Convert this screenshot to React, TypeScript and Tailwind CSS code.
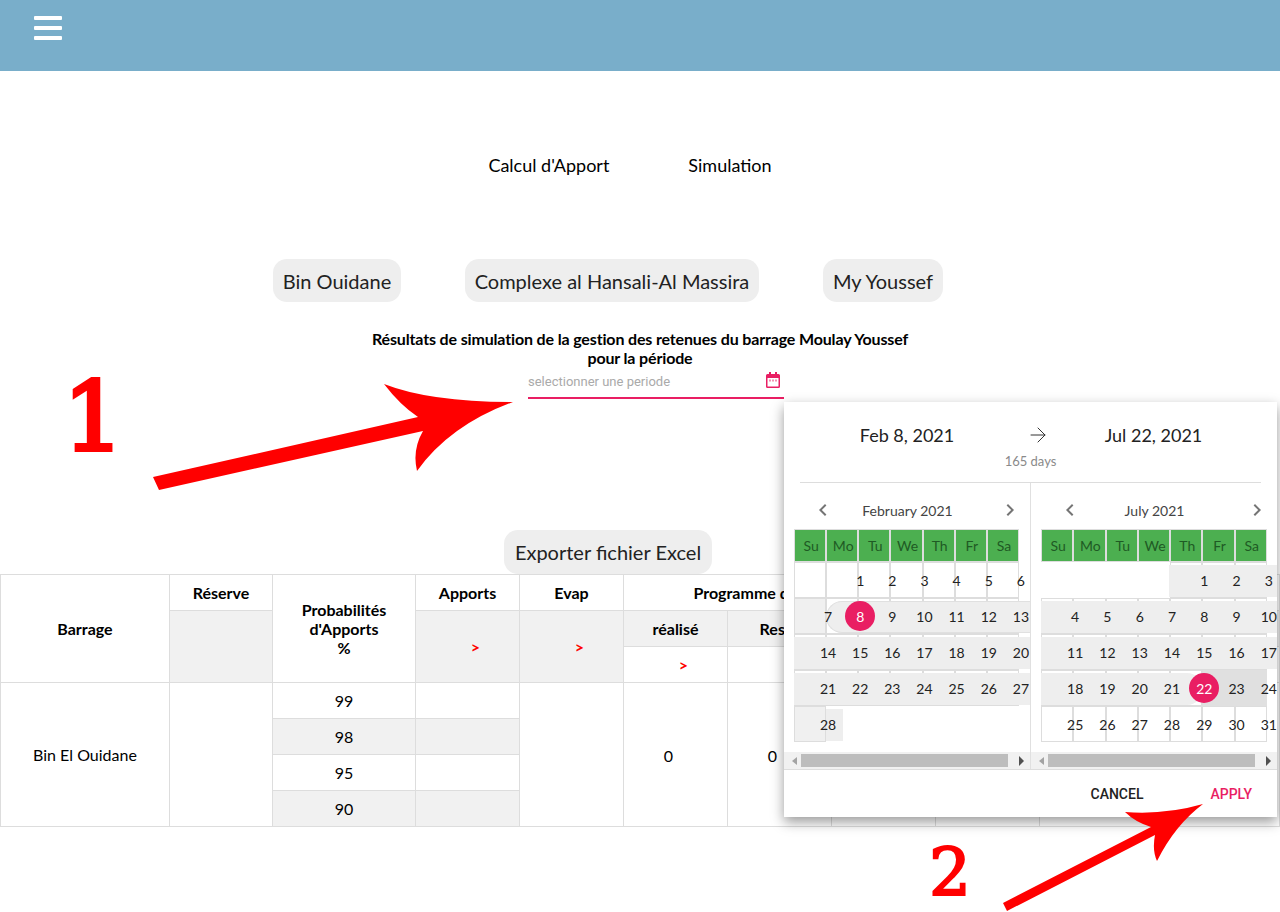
import { ArrowRight } from 'lucide-react'

type CalRow = {
    days: (number | null)[]
    bands?: string[]
    graySu?: boolean
    plain?: number
    selected?: number
}

const februaryRows: CalRow[] = [
    { days: [null, 1, 2, 3, 4, 5, 6] },
    { days: [7, 8, 9, 10, 11, 12, 13], graySu: true, selected: 8, bands: ['left-8 right-0 rounded-l-[18px] border-l border-y border-[#e0e0e0] bg-[#eeeeee]'] },
    { days: [14, 15, 16, 17, 18, 19, 20], bands: ['left-0 right-0 bg-[#eeeeee]'] },
    { days: [21, 22, 23, 24, 25, 26, 27], bands: ['left-0 right-0 bg-[#eeeeee]'] },
    { days: [28, null, null, null, null, null, null], graySu: true, plain: 1, bands: ['left-8 w-[17px] bg-[#eeeeee]'] },
]

const julyRows: CalRow[] = [
    { days: [null, null, null, null, 1, 2, 3], plain: 4, bands: ['left-[128px] right-0 bg-[#eeeeee]'] },
    { days: [4, 5, 6, 7, 8, 9, 10], bands: ['left-0 right-0 bg-[#eeeeee]'] },
    { days: [11, 12, 13, 14, 15, 16, 17], bands: ['left-0 right-0 bg-[#eeeeee]'] },
    { days: [18, 19, 20, 21, 22, 23, 24], selected: 22, bands: ['left-0 w-[162px] rounded-r-[18px] bg-[#eeeeee]', 'left-[162px] w-[64px] !top-0 !bottom-0 bg-[#e0e0e0]'] },
    { days: [25, 26, 27, 28, 29, 30, 31] },
]

const weekDays = ['Su', 'Mo', 'Tu', 'We', 'Th', 'Fr', 'Sa']

function Chevron({ right }: { right?: boolean }) {
    return (
        <svg width="24" height="24" viewBox="0 0 24 24" className="shrink-0 fill-[#757575]">
            <path d={right ? 'M10 6L8.59 7.41 13.17 12l-4.58 4.59L10 18l6-6z' : 'M15.41 7.41L14 6l-6 6 6 6 1.41-1.41L10.83 12z'} />
        </svg>
    )
}

function ScrollBar() {
    return (
        <div className="flex h-[17px] items-center bg-[#f1f1f1]">
            <div className="ml-2 h-0 w-0 border-y-[4px] border-r-[5px] border-y-transparent border-r-[#a3a3a3]" />
            <div className="ml-[4px] h-[13px] w-[207px] bg-[#bdbdbd]" />
            <div className="ml-[11px] h-0 w-0 border-y-[5px] border-l-[5px] border-y-transparent border-l-[#505050]" />
        </div>
    )
}

function CalendarPane({ title, rows, tableWidth, last }: { title: string; rows: CalRow[]; tableWidth: string; last?: boolean }) {
    return (
        <div className={`flex flex-col overflow-hidden ${last ? 'w-[246px]' : 'w-[247px] border-r border-[#e0e0e0]'}`}>
            <div className="flex h-[46px] items-center pt-[8px] pr-[8px] pl-[27px]">
                <Chevron />
                <div className="flex-1 pr-[18px] text-center text-[14px] text-[#444]">{title}</div>
                <Chevron right />
            </div>
            <div className="h-[223px] pl-[10px]">
                <div className={`grid grid-cols-7 ${tableWidth}`}>
                    {weekDays.map((d) => (
                        <div key={d} className="flex h-[33px] items-center justify-center border border-[#dddddd] bg-[#4caf50] pl-[2px] text-[14px] text-[#1f5a24]">
                            {d}
                        </div>
                    ))}
                </div>
                {rows.map((row, i) => (
                    <div key={i} className="relative h-9">
                        <div className={`grid h-9 grid-cols-7 ${tableWidth}`}>
                            {row.days.map((_, j) => (
                                <div
                                    key={j}
                                    className={`${row.plain !== undefined && j >= (row.plain === 4 ? 0 : 1) && (row.plain === 4 ? j < 4 : true) ? '' : 'border border-[#dddddd]'} ${row.graySu && j === 0 ? 'bg-[#f0f0f0]' : ''}`}
                                />
                            ))}
                        </div>
                        {row.bands?.map((b) => (
                            <div key={b} className={`absolute top-[3px] bottom-[1px] ${b}`} />
                        ))}
                        <div className={`absolute top-0 left-0 grid h-9 grid-cols-7 ${tableWidth}`}>
                            {row.days.map((d, j) => (
                                <div key={j} className="flex translate-x-[18px] items-center justify-center text-[14px] text-[#222]">
                                    {d === row.selected && d !== null ? (
                                        <span className="flex h-[30px] w-[30px] items-center justify-center rounded-full bg-[#e91e63] text-white">{d}</span>
                                    ) : (
                                        d
                                    )}
                                </div>
                            ))}
                        </div>
                    </div>
                ))}
            </div>
            <ScrollBar />
        </div>
    )
}

function DatePopup() {
    return (
        <div className="absolute top-[402px] left-[784px] z-10 w-[493px] bg-white font-['Lato',sans-serif] shadow-[0_5px_12px_rgba(0,0,0,0.4)]">
            <div className="relative h-[80px] pt-[21px]">
                <div className="flex">
                    <div className="w-[246px] text-center text-[18px] leading-[24px] text-[#222]">Feb 8, 2021</div>
                    <div className="w-[247px] text-center text-[18px] leading-[24px] text-[#222]">Jul 22, 2021</div>
                </div>
                <ArrowRight size={24} strokeWidth={1} className="absolute top-[21px] left-[242px] text-[#333]" />
                <div className="mt-[6px] text-center text-[13px] leading-[16px] text-[#8a8a8a]">165 days</div>
            </div>
            <div className="mx-4 border-t border-[#dddddd]" />
            <div className="flex border-b border-[#dddddd]">
                <CalendarPane title="February 2021" rows={februaryRows} tableWidth="w-[225px]" />
                <CalendarPane title="July 2021" rows={julyRows} tableWidth="w-[226px]" last />
            </div>
            <div className="flex h-[47px] items-center justify-end gap-[67px] pt-[2px] pr-[25px] font-['Roboto',sans-serif] text-[14px] font-medium">
                <span className="text-[#222]">CANCEL</span>
                <span className="text-[#e91e63]">APPLY</span>
            </div>
        </div>
    )
}

function Annotations() {
    return (
        <>
            <svg width="1280" height="912" viewBox="0 0 1280 912" className="pointer-events-none absolute top-0 left-0 z-20">
                <path fill="#ff0000" d="M153 477 L418 417 Q400 405 384 384 Q430 402 513 402 Q450 425 417 471 Q412 450 423 431 L159 490 Z" />
                <path fill="#ff0000" d="M1003 903 L1151 827 Q1135 822 1125 812 Q1165 815 1203 804 Q1175 825 1157 861 Q1152 850 1155 835 L1007 911 Z" />
            </svg>
            <div className="absolute top-[352px] left-[63px] z-20 font-['DejaVu_Serif',serif] text-[96px] leading-[130px] text-[#ff0000] [-webkit-text-stroke:4px_#ff0000]">1</div>
            <div className="absolute top-[832px] left-[929px] z-20 font-['DejaVu_Serif',serif] text-[66px] leading-[82px] text-[#ff0000] [-webkit-text-stroke:2px_#ff0000]">2</div>
        </>
    )
}

function ResultsTable() {
    const th = 'border border-[#dddddd] text-[16px] leading-[19px] font-bold text-black'
    const td = 'border border-[#dddddd] text-center text-[16px] font-normal text-black'
    const gray = 'bg-[#f1f1f1]'
    const mark = <span className="pl-[16px] text-[16px] font-bold text-[#ff0000]">&gt;</span>
    return (
        <table className="w-[1280px] table-fixed border-collapse text-center">
            <colgroup>
                <col className="w-[169px]" />
                <col className="w-[103px]" />
                <col className="w-[143px]" />
                <col className="w-[104px]" />
                <col className="w-[104px]" />
                <col className="w-[104px]" />
                <col className="w-[104px]" />
                <col className="w-[104px]" />
                <col className="w-[104px]" />
                <col />
            </colgroup>
            <thead>
                <tr className="h-9">
                    <th rowSpan={3} className={th}>Barrage</th>
                    <th className={th}>Réserve</th>
                    <th rowSpan={3} className={th}>Probabilités<br />d'Apports<br />%</th>
                    <th className={th}>Apports</th>
                    <th className={th}>Evap</th>
                    <th colSpan={3} className={`${th} pr-[14px]`}>Programme de lâchers</th>
                    <th className={th} />
                    <th className={th} />
                </tr>
                <tr className="h-9">
                    <th rowSpan={2} className={`${th} ${gray}`} />
                    <th rowSpan={2} className={`${th} ${gray}`}>{mark}</th>
                    <th rowSpan={2} className={`${th} ${gray}`}>{mark}</th>
                    <th className={`${th} ${gray}`}>réalisé</th>
                    <th className={`${th} ${gray}`}>Reste</th>
                    <th className={`${th} ${gray}`} />
                    <th className={`${th} ${gray}`} />
                    <th className={`${th} ${gray}`} />
                </tr>
                <tr className="h-9">
                    <th className={th}>{mark}</th>
                    <th className={th} />
                    <th className={th} />
                    <th className={th} />
                    <th className={th} />
                </tr>
            </thead>
            <tbody>
                <tr className="h-9">
                    <td rowSpan={4} className={td}>Bin El Ouidane</td>
                    <td rowSpan={4} className={td} />
                    <td className={td}>99</td>
                    <td className={td} />
                    <td rowSpan={4} className={td} />
                    <td rowSpan={4} className={`${td} pt-[3px] pr-[14px] text-[14px]`}>0</td>
                    <td rowSpan={4} className={`${td} pt-[3px] pr-[14px] text-[14px]`}>0</td>
                    <td rowSpan={4} className={td} />
                    <td rowSpan={4} className={td} />
                    <td rowSpan={4} className={td} />
                </tr>
                <tr className="h-9">
                    <td className={`${td} ${gray}`}>98</td>
                    <td className={`${td} ${gray}`} />
                </tr>
                <tr className="h-9">
                    <td className={td}>95</td>
                    <td className={td} />
                </tr>
                <tr className="h-9">
                    <td className={`${td} ${gray}`}>90</td>
                    <td className={`${td} ${gray}`} />
                </tr>
            </tbody>
        </table>
    )
}

export default function App() {
    return (
        <div className="relative h-[912px] w-[1280px] overflow-hidden bg-white font-['Lato',sans-serif] text-black">
            {/* Top bar */}
            <div className="h-[71px] bg-[#79aeca] pt-[16px] pl-[34px]">
                <div className="flex w-[28px] flex-col gap-[6px]">
                    <div className="h-1 rounded-[1px] bg-white" />
                    <div className="h-1 rounded-[1px] bg-white" />
                    <div className="h-1 rounded-[1px] bg-white" />
                </div>
            </div>

            {/* Tabs */}
            <div className="mt-[83px] flex justify-center gap-[79px] pr-[20px] text-[18px] leading-[22px]">
                <span>Calcul d'Apport</span>
                <span>Simulation</span>
            </div>

            {/* Barrages */}
            <div className="mt-[83px] flex justify-center text-[20px]">
                <button className="mr-16 h-[43px] w-[128px] rounded-[14px] bg-[#eeeeee] text-[#222]">Bin Ouidane</button>
                <button className="mr-16 h-[43px] w-[294px] rounded-[14px] bg-[#eeeeee] text-[#222]">Complexe al Hansali-Al Massira</button>
                <button className="mr-16 h-[43px] w-[120px] rounded-[14px] bg-[#eeeeee] text-[#222]">My Youssef</button>
            </div>

            <div className="mt-[27px] text-center text-[16px] leading-[19px] font-bold tracking-[-0.15px]">
                Résultats de simulation de la gestion des retenues du barrage Moulay Youssef
                <br />
                pour la période
            </div>

            {/* Period input */}
            <div className="ml-[528px] flex h-[32px] w-[256px] items-center justify-between border-b-2 border-[#e91e63] pr-[4px] pb-[1px] font-['Roboto',sans-serif] text-[13px] text-[#aaaaaa]">
                <span>selectionner une periode</span>
                <svg width="14" height="16" viewBox="0 0 14 16" className="mb-[3px]">
                    <path fill="#e91e63" d="M3 0h2v2h4V0h2v2h1.5A1.5 1.5 0 0 1 14 3.500V14.500A1.500 1.500 0 0 1 12.500 16H1.500A1.500 1.500 0 0 1 0 14.500V3.500A1.500 1.500 0 0 1 1.500 2H3z" />
                    <rect x="1.500" y="6" width="11" height="8.500" fill="#fff" />
                    <rect x="3" y="7.500" width="2" height="2" fill="#f48fb1" />
                    <rect x="6" y="7.500" width="2" height="2" fill="#f48fb1" />
                    <rect x="9" y="7.500" width="2" height="2" fill="#f48fb1" />
                </svg>
            </div>

            <div className="mt-[131px] flex justify-center text-[20px]">
                <button className="mr-16 h-[44px] w-[208px] rounded-[14px] bg-[#eeeeee] text-[#222]">Exporter fichier Excel</button>
            </div>

            <ResultsTable />
            <DatePopup />
            <Annotations />
        </div>
    )
}
